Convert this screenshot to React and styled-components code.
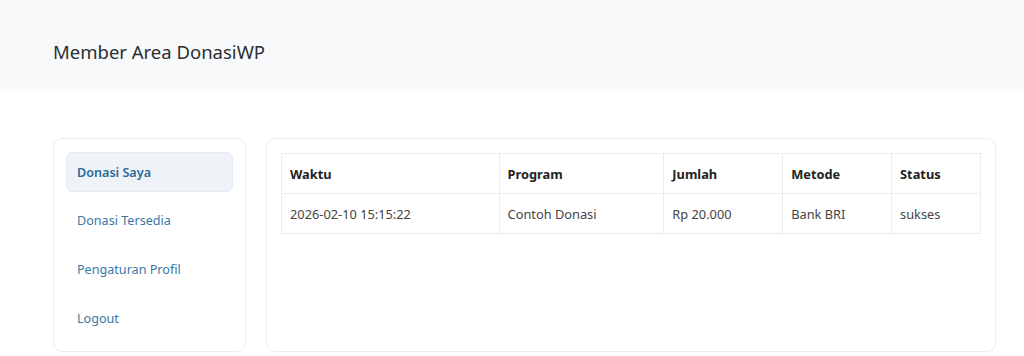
import React from "react";
import styled, { createGlobalStyle } from "styled-components";

const Global = createGlobalStyle`
  html, body { margin: 0; padding: 0; background: #fff; }
  body { font-family: "Noto Sans", "Open Sans", sans-serif; color: #212529; }
  * { box-sizing: border-box; }
`;

const Header = styled.header`
  height: 89px;
  background: #f8f9fb;
  display: flex;
  align-items: center;
  padding: 0 53px;
`;

const Title = styled.h1`
  margin: 0;
  font-size: 18.5px;
  font-weight: 400;
  color: #2b2f33;
  padding-top: 14px;
`;

const Body = styled.main`
  display: grid;
  grid-template-columns: 193px 730px;
  gap: 20px;
  padding: 49px 53px 0;
`;

const Card = styled.div`
  border: 1px solid #ececec;
  border-radius: 9px;
  background: #fff;
  height: 214px;
  padding: ${(p) => p.$pad};
`;

const Nav = styled.nav`
  display: flex;
  flex-direction: column;
  gap: 8.7px;
`;

const NavItem = styled.a`
  display: flex;
  align-items: center;
  height: 40px;
  padding: 0 10px;
  border-radius: 7px;
  font-size: 12.6px;
  text-decoration: none;
  color: #3a79a6;
  font-weight: ${(p) => (p.$active ? 600 : 400)};
  background: ${(p) => (p.$active ? "#eff3f8" : "transparent")};
  border: 1px solid ${(p) => (p.$active ? "#e4eaf1" : "transparent")};
  ${(p) => p.$active && "color: #2b6a98;"}
`;

const Table = styled.table`
  width: 100%;
  border-collapse: collapse;
  font-size: 12.8px;
`;

const Th = styled.th`
  text-align: left;
  font-weight: 700;
  color: #222;
  height: 40px;
  padding: 0 8px;
  border: 1px solid #ececec;
  width: ${(p) => p.$w}px;
`;

const Td = styled.td`
  height: 40px;
  padding: 0 8px;
  color: #444;
  border: 1px solid #ececec;
`;

const cols = [
  ["Waktu", 218],
  ["Program", 165],
  ["Jumlah", 119],
  ["Metode", 109],
  ["Status", 89],
];

const row = ["2026-02-10 15:15:22", "Contoh Donasi", "Rp 20.000", "Bank BRI", "sukses"];

export default function App() {
  return (
    <>
      <Global />
      <Header>
        <Title>Member Area DonasiWP</Title>
      </Header>
      <Body>
        <Card $pad="13px 12px">
          <Nav>
            <NavItem $active href="#">Donasi Saya</NavItem>
            <NavItem href="#">Donasi Tersedia</NavItem>
            <NavItem href="#">Pengaturan Profil</NavItem>
            <NavItem href="#">Logout</NavItem>
          </Nav>
        </Card>
        <Card $pad="14px 14px">
          <Table>
            <thead>
              <tr>
                {cols.map(([c, w]) => (
                  <Th key={c} $w={w}>{c}</Th>
                ))}
              </tr>
            </thead>
            <tbody>
              <tr>
                {row.map((v) => (
                  <Td key={v}>{v}</Td>
                ))}
              </tr>
            </tbody>
          </Table>
        </Card>
      </Body>
    </>
  );
}
